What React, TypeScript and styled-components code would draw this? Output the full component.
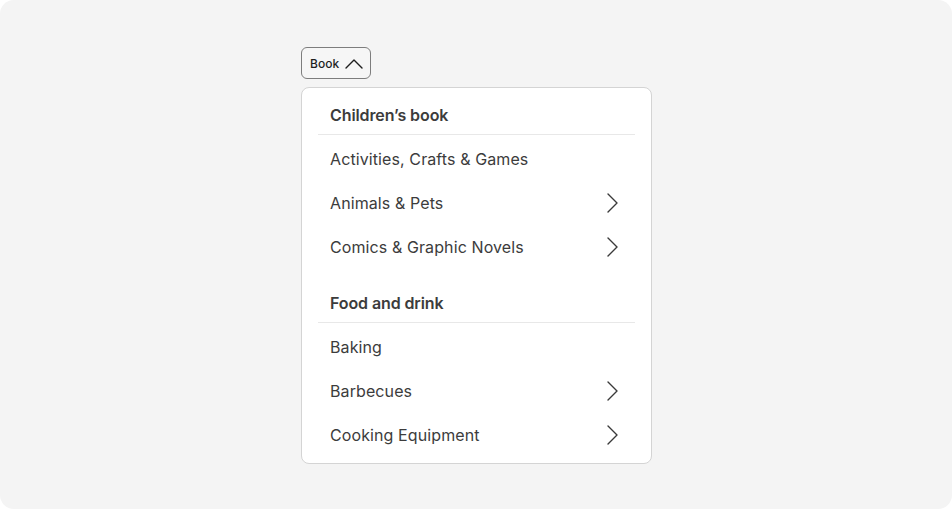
import React from "react";
import styled, { createGlobalStyle } from "styled-components";

const Global = createGlobalStyle`
  html, body { margin: 0; padding: 0; background: #ffffff; }
  body { font-family: Inter, "Noto Sans", sans-serif; -webkit-font-smoothing: antialiased; }
`;

const Canvas = styled.div`
  width: 952px;
  height: 509px;
  box-sizing: border-box;
  background: #f4f4f4;
  border-radius: 14px;
  padding: 47px 0 0 301px;
  display: flex;
  flex-direction: column;
  align-items: flex-start;
  gap: 8px;
`;

const Trigger = styled.button`
  box-sizing: border-box;
  width: 70px;
  height: 32px;
  display: flex;
  align-items: center;
  gap: 6px;
  padding: 0 0 0 8px;
  border: 1px solid #7d7d7d;
  border-radius: 6px;
  background: #f6f6f6;
  font-family: Inter, sans-serif;
  font-size: 12px;
  font-weight: 500;
  color: #1e1e1e;
  cursor: pointer;
`;

const Menu = styled.div`
  box-sizing: border-box;
  width: 351px;
  border: 1px solid #d4d4d4;
  border-radius: 8px;
  background: #ffffff;
  padding: 8px 16px 6px;
  display: flex;
  flex-direction: column;
  gap: 15px;
`;

const Group = styled.div`
  display: flex;
  flex-direction: column;
`;

const GroupHeader = styled.div`
  height: 38px;
  display: flex;
  align-items: center;
  padding: 0 12px;
  font-size: 16px;
  font-weight: 600;
  letter-spacing: -0.1px;
  color: #3c3c3c;
  border-bottom: 1px solid #e8e8e8;
  margin-bottom: 2px;
`;

const Item = styled.div`
  height: 44px;
  display: flex;
  align-items: center;
  justify-content: space-between;
  padding: 0 17px 0 12px;
  font-size: 16px;
  font-weight: 400;
  letter-spacing: 0.1px;
  color: #3c3c3c;
  border-radius: 6px;
`;

const ChevronRight = () => (
  <svg width="11" height="20" viewBox="0 0 11 20" fill="none">
    <path d="M1 1 L10 10 L1 19" stroke="#3a3a3a" strokeWidth="1.4" strokeLinecap="round" strokeLinejoin="round" />
  </svg>
);

const ChevronUp = () => (
  <svg width="18" height="11" viewBox="0 0 18 11" fill="none">
    <path d="M1 10 L9 2 L17 10" stroke="#1e1e1e" strokeWidth="1.4" strokeLinecap="round" strokeLinejoin="round" />
  </svg>
);

type Entry = { label: string; sub?: boolean };
const groups: { title: string; items: Entry[] }[] = [
  {
    title: "Children’s book",
    items: [
      { label: "Activities, Crafts & Games" },
      { label: "Animals & Pets", sub: true },
      { label: "Comics & Graphic Novels", sub: true },
    ],
  },
  {
    title: "Food and drink",
    items: [
      { label: "Baking" },
      { label: "Barbecues", sub: true },
      { label: "Cooking Equipment", sub: true },
    ],
  },
];

export default function App() {
  return (
    <>
      <Global />
      <Canvas>
        <Trigger>
          Book
          <ChevronUp />
        </Trigger>
        <Menu>
          {groups.map((g) => (
            <Group key={g.title}>
              <GroupHeader>{g.title}</GroupHeader>
              {g.items.map((it) => (
                <Item key={it.label}>
                  <span>{it.label}</span>
                  {it.sub && <ChevronRight />}
                </Item>
              ))}
            </Group>
          ))}
        </Menu>
      </Canvas>
    </>
  );
}
